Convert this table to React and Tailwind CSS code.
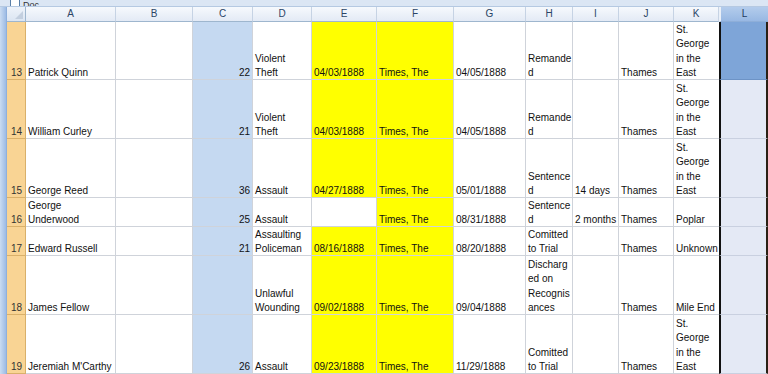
import React from 'react'

const cols = ['A', 'B', 'C', 'D', 'E', 'F', 'G', 'H', 'I', 'J', 'K', 'L']

const stGeorge = ['St.', 'George', 'in the', 'East']

// each row: number, height, cells keyed by column letter (array of lines)
const rows = [
  {
    n: 13, h: 'h-[58px]', e: true,
    A: ['Patrick Quinn'], C: ['22'], D: ['Violent', 'Theft'], E: ['04/03/1888'], F: ['Times, The'],
    G: ['04/05/1888'], H: ['Remande', 'd'], J: ['Thames'], K: stGeorge, active: true,
  },
  {
    n: 14, h: 'h-[59px]', e: true,
    A: ['William Curley'], C: ['21'], D: ['Violent', 'Theft'], E: ['04/03/1888'], F: ['Times, The'],
    G: ['04/05/1888'], H: ['Remande', 'd'], J: ['Thames'], K: stGeorge,
  },
  {
    n: 15, h: 'h-[59px]', e: true,
    A: ['George Reed'], C: ['36'], D: ['Assault'], E: ['04/27/1888'], F: ['Times, The'],
    G: ['05/01/1888'], H: ['Sentence', 'd'], I: ['14 days'], J: ['Thames'], K: stGeorge,
  },
  {
    n: 16, h: 'h-[29px]', e: false,
    A: ['George', 'Underwood'], C: ['25'], D: ['Assault'], F: ['Times, The'],
    G: ['08/31/1888'], H: ['Sentence', 'd'], I: ['2 months'], J: ['Thames'], K: ['Poplar'],
  },
  {
    n: 17, h: 'h-[29px]', e: true,
    A: ['Edward Russell'], C: ['21'], D: ['Assaulting', 'Policeman'], E: ['08/16/1888'], F: ['Times, The'],
    G: ['08/20/1888'], H: ['Comitted', 'to Trial'], J: ['Thames'], K: ['Unknown'],
  },
  {
    n: 18, h: 'h-[59px]', e: true,
    A: ['James Fellow'], D: ['Unlawful', 'Wounding'], E: ['09/02/1888'], F: ['Times, The'],
    G: ['09/04/1888'], H: ['Discharg', 'ed on', 'Recognis', 'ances'], J: ['Thames'], K: ['Mile End'],
  },
  {
    n: 19, h: 'h-[59px]', e: true,
    A: ["Jeremiah M'Carthy"], C: ['26'], D: ['Assault'], E: ['09/23/1888'], F: ['Times, The'],
    G: ['11/29/1888'], H: ['Comitted', 'to Trial'], J: ['Thames'], K: stGeorge,
  },
]

const gridCols = 'grid grid-cols-[19px_90px_77px_60px_59px_65px_77px_72px_47px_46px_55px_45px_49px]'

const Cell = ({ lines = [], className = '', right = false }) => (
  <div
    className={`flex flex-col justify-end overflow-hidden border-b border-[#cfd3da] leading-[14.6px] px-[2px] whitespace-nowrap ${right ? 'items-end' : 'items-start'} ${className}`}
  >
    {lines.map((l, i) => (
      <span key={i} className="translate-y-[2px]">{l}</span>
    ))}
  </div>
)

export default function App() {
  return (
    <div
      className="w-[768px] h-[374px] overflow-hidden bg-white text-[10px] text-[#111]"
      style={{ fontFamily: '"Liberation Sans", Arial, sans-serif' }}
    >
      {/* window title strip, mostly cut off */}
      <div className="h-[7px] bg-[#dbe6f4] border-b border-[#b5c9e2] flex items-end overflow-hidden pl-[10px] gap-[3px]">
        <svg width="10" height="12" viewBox="0 0 10 12" className="mb-[-5px]">
          <rect x="0.5" y="0.5" width="9" height="11" fill="#fff" stroke="#5a7fa8" />
          <rect x="2" y="7" width="6" height="1" fill="#3c8a3c" />
          <rect x="2" y="9" width="6" height="1" fill="#3c8a3c" />
        </svg>
        <span className="leading-[10px] text-[9px] text-[#333] mb-[-4px]">Doc</span>
      </div>

      <div className="flex">
        {/* left frame strip */}
        <div className="w-[7px] h-[367px] bg-gradient-to-r from-[#cadcf2] to-[#9dbbe4] border-r border-[#8fb0dc]" />

        <div className="flex-1">
          {/* column headers */}
          <div className={`${gridCols} h-[15px]`}>
            <div className="relative bg-gradient-to-b from-[#eef3fa] to-[#dbe5f2] border-r border-b border-[#9eb6ce]">
              <svg width="8" height="8" viewBox="0 0 8 8" className="absolute right-[2px] bottom-[2px]">
                <polygon points="8,0 8,8 0,8" fill="#c3cfdf" />
              </svg>
            </div>
            {cols.map((c) => (
              <div
                key={c}
                className={`flex items-center justify-center text-[10px] leading-none border-b ${
                  c === 'L'
                    ? 'bg-gradient-to-b from-[#b3ccec] to-[#98b8e3] border-[#8eaed8] text-[#1f3b5e] border-l-2 border-l-[#eaf0f8]'
                    : 'bg-gradient-to-b from-[#f6f9fd] to-[#e3eaf5] border-r border-[#c6d3e4] border-b-[#9eb6ce] text-[#2b4566]'
                }`}
              >
                {c}
              </div>
            ))}
          </div>

          {rows.map((r) => (
            <div key={r.n} className={`${gridCols} ${r.h}`}>
              <div className="flex items-end justify-end px-[3px] leading-[14.6px] bg-[#f9d494] border-r border-b border-[#d9b06a] text-[#333]">
                <span className="translate-y-[2px]">{r.n}</span>
              </div>
              <Cell lines={r.A} className="border-r" />
              <Cell lines={r.B} className="border-r" />
              <Cell lines={r.C} right className="border-r bg-[#c5d9f1]" />
              <Cell lines={r.D} className="border-r" />
              <Cell lines={r.E} className={`border-r ${r.e ? 'bg-[#ffff00]' : ''}`} />
              <Cell lines={r.F} className="border-r bg-[#ffff00]" />
              <Cell lines={r.G} className="border-r" />
              <Cell lines={r.H} className="border-r" />
              <Cell lines={r.I} className="border-r" />
              <Cell lines={r.J} className="border-r" />
              <Cell lines={r.K} />
              <div
                className={`border-l-2 border-r-2 border-l-[#111] border-r-[#2a2015] border-b ${
                  r.active ? 'bg-[#7ea5d8] border-b-[#6d93c6]' : 'bg-[#e4e9f5] border-b-[#c9d0e0]'
                }`}
              />
            </div>
          ))}
        </div>
      </div>
    </div>
  )
}
